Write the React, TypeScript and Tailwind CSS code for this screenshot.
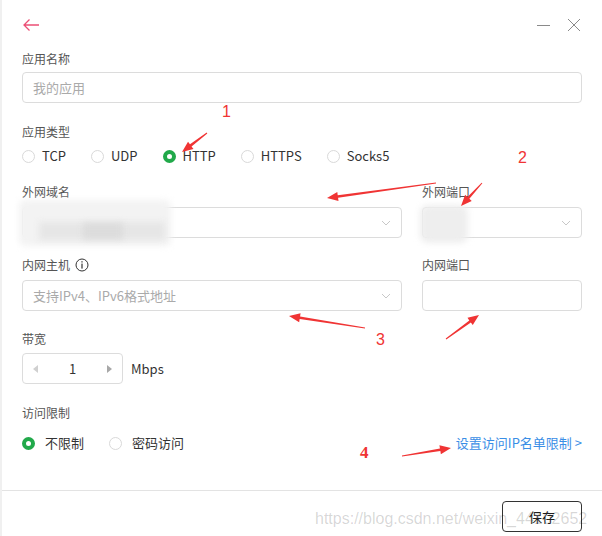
import React from 'react';

const font = { fontFamily: '"Noto Sans CJK SC", "Noto Sans", sans-serif' };

function arrowPoints(x1: number, y1: number, x2: number, y2: number) {
  const dx = x2 - x1;
  const dy = y2 - y1;
  const len = Math.hypot(dx, dy);
  const ux = dx / len;
  const uy = dy / len;
  const nx = -uy;
  const ny = ux;
  const headLen = 11;
  const headW = 4.5;
  const bx = x2 - ux * headLen;
  const by = y2 - uy * headLen;
  const pts: [number, number][] = [
    [x1 + nx * 0.5, y1 + ny * 0.5],
    [bx + nx * 1.3, by + ny * 1.3],
    [bx + nx * headW, by + ny * headW],
    [x2, y2],
    [bx - nx * headW, by - ny * headW],
    [bx - nx * 1.3, by - ny * 1.3],
    [x1 - nx * 0.5, y1 - ny * 0.5],
  ];
  return pts.map((p) => p.join(',')).join(' ');
}

const arrows = [
  [207, 133, 182, 152],
  [436, 183, 327, 198],
  [482, 183, 461, 206],
  [365, 328, 289, 316],
  [446, 339, 479, 315],
  [402, 456, 451, 448],
];

function Radio({ label, checked, wide }: { label: string; checked?: boolean; wide?: boolean }) {
  return (
    <label className={`flex items-center ${wide ? 'gap-[10px]' : 'gap-[7px]'}`}>
      {checked ? (
        <span className="w-[13px] h-[13px] rounded-full border-[4px] border-[#21a94a] bg-white" />
      ) : (
        <span className="w-[13px] h-[13px] rounded-full border border-[#d9d9d9] bg-white" />
      )}
      <span className="text-[13px] text-[#333]">{label}</span>
    </label>
  );
}

function Chevron() {
  return (
    <svg width="10" height="6" viewBox="0 0 10 6" className="shrink-0">
      <path d="M1 1 L5 5 L9 1" fill="none" stroke="#c8c8c8" strokeWidth="1" />
    </svg>
  );
}

function Label({ children }: { children: React.ReactNode }) {
  return <div className="text-[12px] leading-[18px] text-[#555]">{children}</div>;
}

export default function App() {
  return (
    <div className="relative w-[602px] h-[536px] bg-white border-l-2 border-[#f0f0f0] overflow-hidden" style={font}>
      {/* header */}
      <div className="h-[50px] flex items-center justify-between pl-[20px] pr-[21px]">
        <svg width="18" height="14" viewBox="0 0 18 14">
          <path d="M17 7 H2 M7.5 1.5 L2 7 L7.5 12.5" fill="none" stroke="#ec4f75" strokeWidth="1.3" />
        </svg>
        <div className="flex items-center gap-[17px]">
          <svg width="13" height="13" viewBox="0 0 13 13">
            <path d="M0 6.5 H13" stroke="#8a8a8a" strokeWidth="1" />
          </svg>
          <svg width="14" height="14" viewBox="0 0 14 14">
            <path d="M1 1 L13 13 M13 1 L1 13" stroke="#8a8a8a" strokeWidth="1" />
          </svg>
        </div>
      </div>

      <div className="pl-[20px] pr-[20px]">
        <Label>应用名称</Label>
        <div className="mt-[4px] h-[31px] rounded-[4px] border border-[#dcdcdc] flex items-center px-[10px] text-[13px] text-[#aaa]">
          我的应用
        </div>

        <div className="mt-[20px]">
          <Label>应用类型</Label>
        </div>
        <div className="mt-[5px] h-[20px] flex items-center gap-[25px]">
          <Radio label="TCP" />
          <Radio label="UDP" />
          <Radio label="HTTP" checked />
          <Radio label="HTTPS" />
          <Radio label="Socks5" />
        </div>

        <div className="mt-[17px] flex gap-[20px]">
          <div className="flex-1">
            <Label>外网域名</Label>
            <div className="relative mt-[6px] h-[31px] rounded-[4px] border border-[#dcdcdc] flex items-center justify-end pr-[10px]">
              <Chevron />
              <div className="absolute left-[-4px] top-[-8px] w-[152px] h-[46px] bg-[#f3f3f3] blur-[3px] rounded-[6px]" />
              <div className="absolute left-[16px] top-[14px] w-[126px] h-[18px] bg-[#e6e6e6] blur-[3px]" />
              <div className="absolute left-[60px] top-[15px] w-[40px] h-[16px] bg-[#dcdcdc] blur-[3px]" />
            </div>
          </div>
          <div className="w-[160px]">
            <Label>外网端口</Label>
            <div className="relative mt-[6px] h-[31px] rounded-[4px] border border-[#dcdcdc] flex items-center justify-end pr-[10px]">
              <Chevron />
              <div className="absolute left-[-3px] top-[-3px] w-[48px] h-[38px] bg-[#eeeeee] blur-[3px] rounded-[8px]" />
            </div>
          </div>
        </div>

        <div className="mt-[18px] flex gap-[20px]">
          <div className="flex-1">
            <div className="flex items-center gap-[5px]">
              <Label>内网主机</Label>
              <svg width="14" height="14" viewBox="0 0 14 14">
                <circle cx="7" cy="7" r="6" fill="none" stroke="#333" strokeWidth="1" />
                <rect x="6.4" y="3.2" width="1.2" height="1.3" fill="#333" />
                <rect x="6.4" y="5.6" width="1.2" height="5" fill="#333" />
              </svg>
            </div>
            <div className="mt-[6px] h-[31px] rounded-[4px] border border-[#dcdcdc] flex items-center justify-between px-[10px]">
              <span className="text-[13px] text-[#aaa]">支持IPv4、IPv6格式地址</span>
              <Chevron />
            </div>
          </div>
          <div className="w-[160px]">
            <Label>内网端口</Label>
            <div className="mt-[6px] h-[31px] rounded-[4px] border border-[#dcdcdc]" />
          </div>
        </div>

        <div className="mt-[19px]">
          <Label>带宽</Label>
        </div>
        <div className="mt-[5px] flex items-center gap-[8px]">
          <div className="w-[101px] h-[31px] rounded-[4px] border border-[#dcdcdc] flex items-center justify-between px-[10px]">
            <svg width="5" height="8" viewBox="0 0 5 8">
              <path d="M5 0 L0 4 L5 8 Z" fill="#d0d0d0" />
            </svg>
            <span className="text-[13px] text-[#333]">1</span>
            <svg width="5" height="8" viewBox="0 0 5 8">
              <path d="M0 0 L5 4 L0 8 Z" fill="#a8a8a8" />
            </svg>
          </div>
          <span className="text-[13px] text-[#333]">Mbps</span>
        </div>

        <div className="mt-[20px]">
          <Label>访问限制</Label>
        </div>
        <div className="mt-[11px] h-[20px] flex items-center justify-between">
          <div className="flex items-center gap-[25px]">
            <Radio label="不限制" checked wide />
            <Radio label="密码访问" wide />
          </div>
          <a className="text-[13px] text-[#3a8ee6]">设置访问IP名单限制 &gt;</a>
        </div>
      </div>

      <div className="mt-[37px] border-t border-[#e3e3e3]" />
      <div className="mt-[10px] flex justify-end pr-[20px]">
        <button className="w-[80px] h-[31px] rounded-[4px] border border-[#333] text-[13px] text-[#222] bg-white">
          保存
        </button>
      </div>

      {/* watermark */}
      <div
        className="absolute left-[313px] top-[508px] text-[16px] leading-[22px] text-[rgba(0,0,0,0.17)] pointer-events-none whitespace-nowrap"
        style={{ fontFamily: '"Liberation Sans", Arial, sans-serif' }}
      >
        https://blog.csdn.net/weixin_44102652
      </div>

      {/* annotations */}
      <svg className="absolute left-0 top-0 pointer-events-none" width="602" height="536">
        {arrows.map((a, i) => (
          <polygon key={i} points={arrowPoints(a[0] - 2, a[1], a[2] - 2, a[3])} fill="#f03434" />
        ))}
      </svg>
      <span className="absolute left-[220px] top-[102px] text-[16px] leading-[20px] text-[#f03434]" style={{ fontFamily: '"Liberation Sans", sans-serif' }}>1</span>
      <span className="absolute left-[516px] top-[148px] text-[16px] leading-[20px] text-[#f03434]" style={{ fontFamily: '"Liberation Sans", sans-serif' }}>2</span>
      <span className="absolute left-[374px] top-[330px] text-[16px] leading-[20px] text-[#f03434]" style={{ fontFamily: '"Liberation Sans", sans-serif' }}>3</span>
      <span className="absolute left-[358px] top-[443px] text-[17px] leading-[20px] font-bold text-[#f03434]" style={{ fontFamily: '"Liberation Serif", serif' }}>4</span>
    </div>
  );
}
